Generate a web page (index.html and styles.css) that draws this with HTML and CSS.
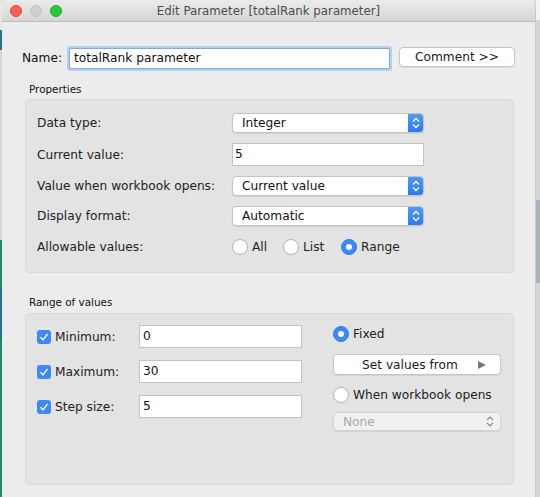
FILE: index.html
```html
<!DOCTYPE html>
<html>
<head>
<meta charset="utf-8">
<link rel="stylesheet" href="styles.css">
</head>
<body>
<div class="screen">
  <div class="edge edge-left"></div>
  <div class="window">
    <div class="titlebar">
      <div class="lights">
        <span class="light red"></span>
        <span class="light grey"></span>
        <span class="light green"></span>
      </div>
      <div class="title">Edit Parameter [totalRank parameter]</div>
      <div></div>
    </div>
    <div class="content">
      <div class="name-row">
        <div class="name-label">Name:</div>
        <div class="field name-field">totalRank parameter</div>
        <div class="button comment-btn">Comment &gt;&gt;</div>
      </div>

      <div class="group-title">Properties</div>
      <div class="panel props">
        <div class="prop-row">
          <div class="prop-label">Data type:</div>
          <div class="select">Integer<span class="stepper"><svg width="16" height="20" viewBox="0 0 16 20"><polyline points="5,8.5 8,5.5 11,8.5" fill="none" stroke="#fff" stroke-width="1.3"/><polyline points="5,11.5 8,14.5 11,11.5" fill="none" stroke="#fff" stroke-width="1.3"/></svg></span></div>
        </div>
        <div class="prop-row">
          <div class="prop-label">Current value:</div>
          <div class="field value-field">5</div>
        </div>
        <div class="prop-row">
          <div class="prop-label">Value when workbook opens:</div>
          <div class="select">Current value<span class="stepper"><svg width="16" height="20" viewBox="0 0 16 20"><polyline points="5,8.5 8,5.5 11,8.5" fill="none" stroke="#fff" stroke-width="1.3"/><polyline points="5,11.5 8,14.5 11,11.5" fill="none" stroke="#fff" stroke-width="1.3"/></svg></span></div>
        </div>
        <div class="prop-row">
          <div class="prop-label">Display format:</div>
          <div class="select">Automatic<span class="stepper"><svg width="16" height="20" viewBox="0 0 16 20"><polyline points="5,8.5 8,5.5 11,8.5" fill="none" stroke="#fff" stroke-width="1.3"/><polyline points="5,11.5 8,14.5 11,11.5" fill="none" stroke="#fff" stroke-width="1.3"/></svg></span></div>
        </div>
        <div class="prop-row radio-row">
          <div class="prop-label">Allowable values:</div>
          <div class="radios">
            <div class="radio-item"><span class="radio"></span>All</div>
            <div class="radio-item"><span class="radio"></span>List</div>
            <div class="radio-item"><span class="radio on"></span>Range</div>
          </div>
        </div>
      </div>

      <div class="group-title range-title">Range of values</div>
      <div class="panel range">
        <div class="range-left">
          <div class="range-row">
            <div class="check-label"><span class="check"><svg width="14" height="14" viewBox="0 0 14 14"><polyline points="3.5,7.2 6,9.8 10.5,3.8" fill="none" stroke="#fff" stroke-width="1.4"/></svg></span>Minimum:</div>
            <div class="field range-field">0</div>
          </div>
          <div class="range-row">
            <div class="check-label"><span class="check"><svg width="14" height="14" viewBox="0 0 14 14"><polyline points="3.5,7.2 6,9.8 10.5,3.8" fill="none" stroke="#fff" stroke-width="1.4"/></svg></span>Maximum:</div>
            <div class="field range-field">30</div>
          </div>
          <div class="range-row">
            <div class="check-label"><span class="check"><svg width="14" height="14" viewBox="0 0 14 14"><polyline points="3.5,7.2 6,9.8 10.5,3.8" fill="none" stroke="#fff" stroke-width="1.4"/></svg></span>Step size:</div>
            <div class="field range-field">5</div>
          </div>
        </div>
        <div class="range-right">
          <div class="opt-group">
            <div class="radio-item"><span class="radio on"></span>Fixed</div>
            <div class="button set-btn"><span>Set values from</span><span class="tri"></span></div>
          </div>
          <div class="opt-group tight">
            <div class="radio-item"><span class="radio"></span>When workbook opens</div>
            <div class="select disabled">None<span class="stepper grey"><svg width="16" height="19" viewBox="0 0 16 19"><polyline points="5,8 8,5 11,8" fill="none" stroke="#8a8a8a" stroke-width="1.2"/><polyline points="5,11 8,14 11,11" fill="none" stroke="#8a8a8a" stroke-width="1.2"/></svg></span></div>
          </div>
        </div>
      </div>
    </div>
  </div>
  <div class="edge edge-right"></div>
</div>
</body>
</html>
```

FILE: styles.css
```css
* { box-sizing: border-box; }
html, body { margin: 0; padding: 0; }
body {
  width: 540px;
  height: 497px;
  overflow: hidden;
  font-family: "DejaVu Sans", "Liberation Sans", sans-serif;
  font-size: 12.2px;
  color: #222;
  background: #d8d8d8;
}
.screen {
  display: flex;
  width: 540px;
  height: 497px;
}
.edge-left {
  width: 2px;
  background: linear-gradient(#e6e6e6 0, #e6e6e6 30px, #2f6f8c 30px, #2f6f8c 50px, #d6d6d6 50px, #d6d6d6 240px, #12906b 240px, #12906b 290px, #2f6d8e 290px, #2f6d8e 340px, #12906b 340px, #12906b 497px);
}
.edge-right {
  width: 4px;
  background: linear-gradient(#f2f2f2 0, #f2f2f2 20px, #d4d4d4 20px, #d4d4d4 200px, #a9b2bd 200px, #a9b2bd 283px, #d6d6d6 283px);
}
.window {
  width: 534px;
  height: 497px;
  background: #ececec;
  border-right: 1px solid #c9c9c9;
  border-radius: 5px 5px 0 0;
  overflow: hidden;
}
.titlebar {
  height: 22px;
  display: grid;
  grid-template-columns: 1fr auto 1fr;
  align-items: center;
  background: linear-gradient(#ebebeb, #d6d6d6);
  border-bottom: 1px solid #bdbdbd;
}
.lights {
  display: flex;
  gap: 8px;
  padding-left: 8px;
  padding-top: 1px;
}
.light {
  width: 12px;
  height: 12px;
  border-radius: 50%;
}
.light.red { background: #fc5f57; border: 1px solid #e0443e; }
.light.grey { background: #d1d1d1; border: 1px solid #c1c1c1; }
.light.green { background: #2cc840; border: 1px solid #1dad2b; }
.title {
  font-size: 11.8px;
  color: #4d4d4d;
}
.content {
  padding: 25px 20px 0 20px;
}
.name-row {
  display: flex;
  align-items: flex-start;
  height: 23px;
}
.name-label {
  width: 47px;
  line-height: 23px;
  color: #111;
}
.field {
  background: #fff;
  border: 1px solid #c3c3c3;
  color: #111;
  white-space: nowrap;
}
.name-field {
  width: 321px;
  height: 21px;
  margin-top: 1px;
  line-height: 19px;
  padding-left: 4px;
  border-color: #84a9dc;
  box-shadow: 0 0 0 2px #b8d0f0;
  border-radius: 1px;
}
.button {
  background: #fff;
  border: 1px solid #c5c5c5;
  border-radius: 4px;
  box-shadow: 0 1px 1px rgba(0,0,0,0.08);
  color: #1a1a1a;
}
.comment-btn {
  margin-left: auto;
  width: 116px;
  height: 20px;
  line-height: 18px;
  text-align: center;
}
.group-title {
  font-size: 10.4px;
  line-height: 16px;
  margin-top: 11px;
  margin-bottom: 2px;
  padding-left: 7px;
  color: #111;
}
.range-title {
  margin-top: 21px;
  margin-bottom: 3px;
}
.panel {
  margin-left: 3px;
  width: 489px;
  background: #e3e3e3;
  border: 1px solid #dadada;
  border-radius: 4px;
}
.props {
  height: 174px;
  padding: 13px 0 0 11px;
  display: flex;
  flex-direction: column;
  gap: 10px;
}
.prop-row {
  display: flex;
  align-items: center;
}
.prop-label {
  width: 195px;
  flex: none;
}
.radio-row { margin-top: 3px; }
.select {
  position: relative;
  width: 192px;
  height: 20px;
  line-height: 19px;
  padding-left: 9px;
  background: #fff;
  border: 1px solid #c4c4c4;
  border-radius: 4px;
  box-shadow: 0 1px 1px rgba(0,0,0,0.08);
  color: #111;
  display: flex;
  overflow: hidden;
}
.stepper {
  margin-left: auto;
  width: 16px;
  height: 20px;
  margin-top: -1px;
  margin-right: -1px;
  background: linear-gradient(#4f9bfa, #2a78f0);
  border-radius: 0 4px 4px 0;
  display: flex;
}
.value-field {
  width: 192px;
  height: 23px;
  line-height: 21px;
  padding-left: 2px;
}
.radios {
  display: flex;
  gap: 0;
}
.radio-item {
  display: flex;
  align-items: center;
  gap: 4px;
  height: 16px;
}
.radios .radio-item:nth-child(1) { width: 51px; }
.radios .radio-item:nth-child(2) { width: 58px; }
.radio {
  width: 16px;
  height: 16px;
  border-radius: 50%;
  background: #fff;
  border: 1px solid #b3b3b3;
  flex: none;
  display: flex;
  align-items: center;
  justify-content: center;
}
.radio.on {
  background: #3b8af7;
  border-color: #2f78e6;
}
.radio.on::after {
  content: "";
  width: 6px;
  height: 6px;
  border-radius: 50%;
  background: #fff;
}
.range {
  height: 172px;
  padding: 11px 0 0 11px;
  display: flex;
  gap: 31px;
}
.range-left {
  width: 265px;
  display: flex;
  flex-direction: column;
  gap: 12px;
}
.range-row {
  display: flex;
  align-items: center;
}
.check-label {
  width: 102px;
  display: flex;
  align-items: center;
  gap: 4px;
}
.check {
  width: 14px;
  height: 14px;
  border-radius: 3px;
  background: #3b8af7;
  border: 0;
  display: flex;
}
.range-field {
  width: 163px;
  height: 23px;
  line-height: 21px;
  padding-left: 3px;
}
.range-right {
  width: 168px;
  display: flex;
  flex-direction: column;
  gap: 11px;
}
.opt-group {
  display: flex;
  flex-direction: column;
  gap: 11px;
}
.opt-group.tight { gap: 8px; }
.range-right .radio-item {
  height: 18px;
}
.set-btn {
  height: 21px;
  display: flex;
  align-items: center;
  padding: 0 14px 0 28px;
}
.tri {
  margin-left: auto;
  width: 0;
  height: 0;
  border-left: 8px solid #7a7a7a;
  border-top: 4.5px solid transparent;
  border-bottom: 4.5px solid transparent;
}
.select.disabled {
  width: 168px;
  height: 19px;
  line-height: 18px;
  background: #f1f1f1;
  border-color: #d2d2d2;
  color: #a8a8a8;
}
.stepper.grey {
  background: none;
  height: 19px;
  margin-right: 2px;
}
```
